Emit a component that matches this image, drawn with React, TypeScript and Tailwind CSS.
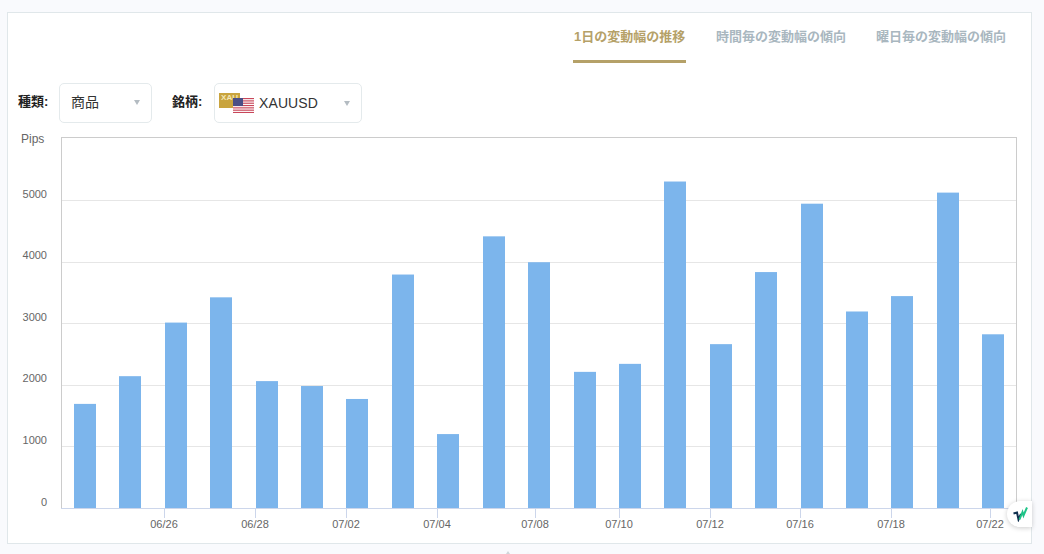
const font = { fontFamily: '"Liberation Sans", "Noto Sans CJK JP", sans-serif' };

const values = [1690, 2140, 3010, 3420, 2060, 1980, 1770, 3790, 1200, 4410, 3990, 2210, 2340, 5300, 2660, 3830, 4940, 3190, 3440, 5120, 2820];
const yTicks = [0, 1000, 2000, 3000, 4000, 5000];
const xTicks = [
  { x: 164, label: '06/26' },
  { x: 255, label: '06/28' },
  { x: 346, label: '07/02' },
  { x: 437, label: '07/04' },
  { x: 535, label: '07/08' },
  { x: 619, label: '07/10' },
  { x: 710, label: '07/12' },
  { x: 800, label: '07/16' },
  { x: 891, label: '07/18' },
  { x: 990, label: '07/22' },
];

function Chart() {
  const scale = 61.6 / 1000;
  return (
    <svg width="1024" height="408" viewBox="0 0 1024 408" className="block" style={font}>
      <text x="14" y="11" fontSize="12" fill="#666">Pips</text>
      <rect x="54.5" y="5.5" width="955" height="371" fill="#fff" stroke="#ccc" />
      {yTicks.slice(1).map((t) => (
        <line key={t} x1="55" x2="1009" y1={376.5 - Math.round(t * scale)} y2={376.5 - Math.round(t * scale)} stroke="#e6e6e6" />
      ))}
      {values.map((v, i) => {
        const h = v * scale;
        return <rect key={i} x={67 + Math.round(i * 45.41)} y={376 - h} width="22" height={h} fill="#7cb5ec" />;
      })}
      <line x1="54" x2="1010" y1="376.5" y2="376.5" stroke="#ccd6eb" />
      {yTicks.map((t) => (
        <text key={t} x="40" y={Math.floor(374 - t * scale)} fontSize="11" fill="#666" textAnchor="end">{t}</text>
      ))}
      {xTicks.map((t) => (
        <g key={t.label}>
          <line x1={t.x - 6.5} x2={t.x - 6.5} y1="377" y2="386" stroke="#ccd6eb" />
          <text x={t.x - 7} y="396" fontSize="11" fill="#666" textAnchor="middle">{t.label}</text>
        </g>
      ))}
    </svg>
  );
}

function Caret() {
  return <span className="ml-auto w-0 h-0 border-x-[3.5px] border-x-transparent border-t-[5px] border-t-[#b4bcc2]" />;
}

function UsFlag() {
  return (
    <svg width="21" height="15" viewBox="0 0 21 15" className="absolute left-[14px] top-[5px]">
      <rect width="21" height="15" fill="#fff" />
      {[0, 2, 4, 6, 8, 10, 12].map((r) => (
        <rect key={r} y={r * 1.16} width="21" height="1.16" fill="#c8475a" />
      ))}
      <rect width="10" height="8" fill="#4a4f86" />
    </svg>
  );
}

export default function App() {
  return (
    <div className="relative w-[1044px] h-[554px] overflow-hidden bg-[#f9fafd] pt-3 pl-[7px]" style={font}>
      <div className="relative w-[1025px] h-[532px] bg-white border border-[#e0e7ea]">
        {/* Tabs */}
        <div className="flex justify-end gap-[30px] pr-[25px] h-[50px] text-[13px] font-bold text-[#a9b7bf]">
          <div className="w-[113px] h-[50px] pt-[14px] pl-px border-b-[3px] border-[#b5a168] text-[#b5a168] whitespace-nowrap">1日の変動幅の推移</div>
          <div className="pt-[14px] whitespace-nowrap">時間毎の変動幅の傾向</div>
          <div className="pt-[14px] whitespace-nowrap">曜日毎の変動幅の傾向</div>
        </div>

        {/* Selects */}
        <div className="flex items-center h-[40px] mt-[20px] pl-[10px] text-[13px] font-bold text-[#222]">
          <span className="w-[41px] -mt-[2px] whitespace-nowrap">種類:</span>
          <div className="flex items-center w-[93px] h-[40px] px-[11px] pb-[2px] border border-[#e4eaec] rounded-[5px] bg-white text-[14px] font-normal text-[#333]">
            商品
            <Caret />
          </div>
          <span className="w-[42px] ml-[20px] -mt-[2px] whitespace-nowrap">銘柄:</span>
          <div className="flex items-center w-[148px] h-[40px] pr-[11px] border border-[#e4eaec] rounded-[5px] bg-white text-[14px] font-normal text-[#333] tracking-[0.1px]">
            <div className="relative w-[35px] h-[20px] ml-[4px] mr-[5px] shrink-0">
              <div className="w-[21px] h-[15px] bg-[#c9a43e] text-[8px] leading-[9px] font-bold text-[#f3e7b8] pl-[2px] overflow-hidden">XAU</div>
              <UsFlag />
            </div>
            XAUUSD
            <Caret />
          </div>
        </div>

        <div className="mt-[9px] -ml-px">
          <Chart />
        </div>
      </div>

      {/* Floating widget */}
      <div className="absolute left-[1007px] top-[501px] w-[25px] h-[26px] bg-white rounded-l-[13px] shadow-[0_1px_5px_rgba(0,0,0,0.2)] flex items-center justify-center">
        <svg width="18" height="16" viewBox="0 0 18 16">
          <path d="M2.5 7.5 L6 6.5 L7.5 13.5 L10 8" fill="none" stroke="#10304f" strokeWidth="2" />
          <path d="M8.5 13.5 L11.5 6 L12.5 9.5 L16 1.5" fill="none" stroke="#1fc488" strokeWidth="2" />
        </svg>
      </div>

      <span className="absolute left-[506px] top-[551px] w-0 h-0 border-x-[2.5px] border-x-transparent border-b-[3px] border-b-[#cfd6da]" />
    </div>
  );
}
